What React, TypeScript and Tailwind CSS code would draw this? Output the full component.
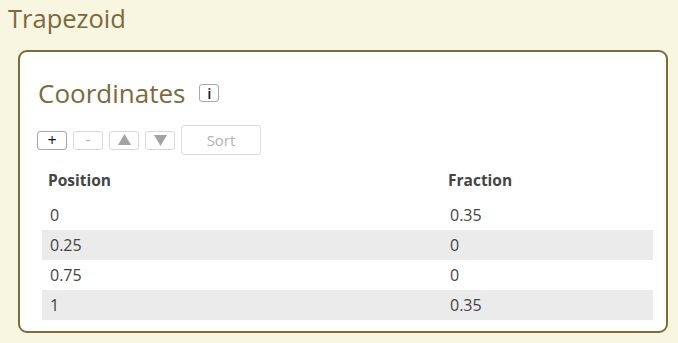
import React from "react";

interface Coordinate {
  position: string;
  fraction: string;
}

const coordinates: Coordinate[] = [
  { position: "0", fraction: "0.35" },
  { position: "0.25", fraction: "0" },
  { position: "0.75", fraction: "0" },
  { position: "1", fraction: "0.35" },
];

const ToolButton: React.FC<{ enabled?: boolean; children: React.ReactNode }> = ({
  enabled,
  children,
}) => (
  <button
    className={
      enabled
        ? "w-[30px] h-[19px] flex items-center justify-center border border-[#a8a8a8] rounded-[3px] bg-white text-[#111] text-[16px] leading-none"
        : "w-[30px] h-[19px] flex items-center justify-center border border-[#d8d8d8] rounded-[3px] bg-white text-[#a9a9a9] text-[14px] leading-none"
    }
  >
    {children}
  </button>
);

// filled arrow used by the move up / move down buttons
const Arrow: React.FC<{ down?: boolean }> = ({ down }) => (
  <svg width="13" height="12" viewBox="0 0 13 12">
    <polygon points={down ? "0,1 13,1 6.5,12" : "6.5,0 13,11 0,11"} fill="#a3a3a3" />
  </svg>
);

const App: React.FC = () => {
  return (
    <div
      className="w-[678px] h-[343px] bg-[#f8f5e1] overflow-hidden"
      style={{ fontFamily: '"Open Sans", sans-serif' }}
    >
      <h1 className="text-[25.5px] leading-[36px] text-[#7a6a3c] pl-[8px]">Trapezoid</h1>
      <div className="mt-[14px] ml-[18px] mr-[10px] h-[283px] border-2 border-[#7b6c3c] rounded-[9px] bg-white pl-[17px] pr-[12px]">
        <div className="flex items-center pt-[20px] h-[62px]">
          <h2 className="text-[26px] leading-none text-[#7a6a3c] ml-[1px]">Coordinates</h2>
          <span className="ml-[14px] w-[20px] h-[18px] flex items-center justify-center border border-[#a8a8a8] rounded-[3px] text-[15px] font-semibold leading-none text-[#1d1d3a]">
            i
          </span>
        </div>
        <div className="flex items-center gap-[6px] mt-[11px] h-[30px]">
          <ToolButton enabled>+</ToolButton>
          <ToolButton>-</ToolButton>
          <ToolButton>
            <Arrow />
          </ToolButton>
          <ToolButton>
            <Arrow down />
          </ToolButton>
          <button className="w-[80px] h-[30px] border border-[#dcdcdc] rounded-[3px] bg-white text-[#b3b3b3] text-[15px]">
            Sort
          </button>
        </div>
        <table className="ml-[5px] mt-[7px] w-[611px] border-collapse text-[16px] text-[#444]">
          <thead>
            <tr className="h-[38px] text-[15.5px]">
              <th className="w-[400px] text-left font-bold pl-[6px]">Position</th>
              <th className="text-left font-bold pl-[6px]">Fraction</th>
            </tr>
          </thead>
          <tbody>
            {coordinates.map((row, index) => (
              <tr key={index} className={index % 2 === 1 ? "h-[30px] bg-[#ebebeb]" : "h-[30px]"}>
                <td className="pl-[8px]">{row.position}</td>
                <td className="pl-[8px]">{row.fraction}</td>
              </tr>
            ))}
          </tbody>
        </table>
      </div>
    </div>
  );
};

export default App;
